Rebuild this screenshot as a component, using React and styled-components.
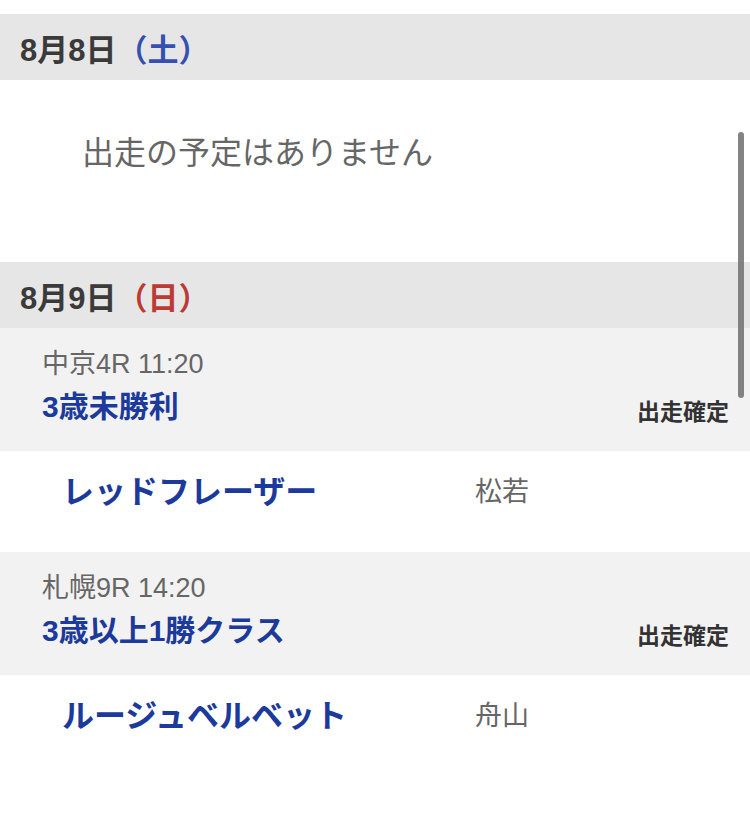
import React from "react";
import styled, { createGlobalStyle } from "styled-components";

const GlobalStyle = createGlobalStyle`
  html, body {
    margin: 0;
    padding: 0;
    background: #fff;
  }
  body {
    font-family: "Liberation Sans", "Noto Sans CJK JP", sans-serif;
    color: #333;
  }
`;

const schedule = [
  { date: "8月8日", day: "土", races: [] },
  {
    date: "8月9日",
    day: "日",
    races: [
      {
        meta: "中京4R 11:20",
        title: "3歳未勝利",
        status: "出走確定",
        horse: "レッドフレーザー",
        jockey: "松若",
      },
      {
        meta: "札幌9R 14:20",
        title: "3歳以上1勝クラス",
        status: "出走確定",
        horse: "ルージュベルベット",
        jockey: "舟山",
      },
    ],
  },
];

const App = () => {
  return (
    <Page>
      <GlobalStyle />
      {schedule.map((d) => (
        <section key={d.date}>
          <DateHeader>
            {d.date}
            <DayMark $sunday={d.day === "日"}>（{d.day}）</DayMark>
          </DateHeader>
          {d.races.length === 0 ? (
            <Empty>出走の予定はありません</Empty>
          ) : (
            d.races.map((r) => (
              <div key={r.meta}>
                <RaceHeader>
                  <RaceMeta>{r.meta}</RaceMeta>
                  <RaceRow>
                    <RaceTitle>{r.title}</RaceTitle>
                    <Status>{r.status}</Status>
                  </RaceRow>
                </RaceHeader>
                <HorseRow>
                  <HorseName>{r.horse}</HorseName>
                  <Jockey>{r.jockey}</Jockey>
                </HorseRow>
              </div>
            ))
          )}
        </section>
      ))}
      <ScrollThumb />
    </Page>
  );
};

const Page = styled.div`
  position: relative;
  width: 750px;
  height: 829px;
  overflow: hidden;
  padding-top: 14px;
  box-sizing: border-box;
  background: #fff;
`;

const DateHeader = styled.div`
  display: flex;
  align-items: center;
  height: 66px;
  padding-left: 20px;
  background: #e6e6e6;
  font-size: 31px;
  font-weight: 700;
  color: #3a3a3a;
`;

const DayMark = styled.span`
  color: ${(p) => (p.$sunday ? "#bb3a33" : "#3550b0")};
`;

const Empty = styled.div`
  height: 182px;
  box-sizing: border-box;
  padding: 51px 0 0 82px;
  font-size: 32px;
  line-height: 44px;
  color: #666;
`;

const RaceHeader = styled.div`
  height: 123px;
  box-sizing: border-box;
  padding: 18px 21px 0 42px;
  background: #f2f2f2;
`;

const RaceMeta = styled.div`
  font-size: 27px;
  line-height: 36px;
  color: #666;
`;

const RaceRow = styled.div`
  display: flex;
  align-items: flex-end;
  justify-content: space-between;
  margin-top: 4px;
`;

const RaceTitle = styled.div`
  font-size: 30px;
  line-height: 42px;
  font-weight: 700;
  color: #1c3a9c;
`;

const Status = styled.div`
  font-size: 23px;
  line-height: 31px;
  font-weight: 700;
  color: #333;
`;

const HorseRow = styled.div`
  display: grid;
  grid-template-columns: 413px 1fr;
  align-items: center;
  align-content: start;
  height: 101px;
  box-sizing: border-box;
  padding: 20px 0 0 62px;
  background: #fff;
`;

const HorseName = styled.div`
  font-size: 32px;
  line-height: 42px;
  font-weight: 700;
  color: #1c3a9c;
`;

const Jockey = styled.div`
  font-size: 27px;
  line-height: 42px;
  color: #666;
`;

const ScrollThumb = styled.div`
  position: absolute;
  left: 738px;
  top: 132px;
  width: 6px;
  height: 266px;
  border-radius: 3px;
  background: rgba(110, 110, 110, 0.85);
`;

export default App;
